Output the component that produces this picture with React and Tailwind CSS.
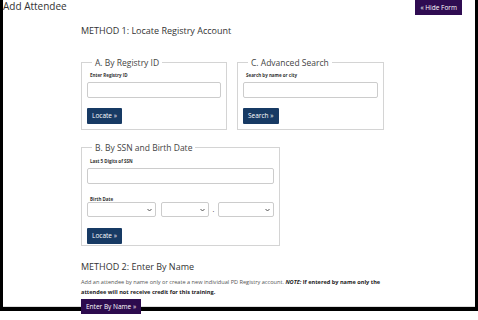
import React from 'react';

const Chevron = () => (
  <svg width="5" height="4" viewBox="0 0 10 8" className="text-[#555]">
    <path d="M1 2l4 4 4-4" fill="none" stroke="currentColor" strokeWidth="2" />
  </svg>
);

const Select = ({ className }) => (
  <div className={`h-[15px] border border-[#ccc] bg-white rounded-[2px] flex items-center justify-end pr-[3px] ${className}`}>
    <Chevron />
  </div>
);

const Label = ({ children }) => (
  <div className="ml-[3px] text-[4.5px] leading-[6px] font-bold text-[#333]">{children}</div>
);

const Field = ({ label }) => (
  <div>
    <Label>{label}</Label>
    <div className="mt-[4px] h-[16px] border border-[#ccc] rounded-[2px] bg-white" />
  </div>
);

const NavyButton = ({ children, className = '' }) => (
  <div className={`flex ${className}`}>
    <button className="h-[16px] px-[5px] bg-[#173a64] text-white text-[6.5px] leading-[16px] rounded-[1px]">
      {children}
    </button>
  </div>
);

const Box = ({ title, className = '', children }) => (
  <fieldset className={`border border-[#d4d4d4] px-[5px] ${className}`}>
    <legend className="ml-[5px] px-[3px] text-[8.5px] leading-[11px] text-[#444]">{title}</legend>
    {children}
  </fieldset>
);

export default function App() {
  return (
    <div className="w-[478px] h-[320px] bg-white overflow-hidden font-['Open_Sans',sans-serif] text-[#333] leading-none">
      <div className="mt-[9px] h-[311px] border-x-[3px] border-b-[4px] border-black">
        <div className="h-full border-b border-[#ddd]">
          <div className="-mt-[9px] h-[15px] flex justify-between items-start">
            <h1 className="-mt-[1px] text-[10px] leading-[14px] text-[#333]">Add Attendee</h1>
            <button className="mr-[13px] h-[15px] px-[5px] bg-[#2f0c52] text-white text-[6.5px] leading-[15px]">
              « Hide Form
            </button>
          </div>

          <div className="pl-[78px]">
            <h2 className="mt-[10px] text-[9px] leading-[12px]">METHOD 1: Locate Registry Account</h2>

            <div className="mt-[20px] flex gap-[10px]">
              <Box title="A. By Registry ID" className="w-[146px] pt-[4px] pb-[5px]">
                <Field label="Enter Registry ID" />
                <NavyButton className="mt-[10px]">Locate »</NavyButton>
              </Box>
              <Box title="C. Advanced Search" className="w-[147px] pt-[4px] pb-[5px]">
                <Field label="Search by name or city" />
                <NavyButton className="mt-[10px]">Search »</NavyButton>
              </Box>
            </div>

            <Box title="B. By SSN and Birth Date" className="mt-[12px] w-[198px] pt-[5px] pb-[1px]">
              <Field label="Last 5 Digits of SSN" />
              <div className="mt-[12px]">
                <Label>Birth Date</Label>
              </div>
              <div className="flex items-center">
                <Select className="w-[69px]" />
                <Select className="ml-[5px] w-[48px]" />
                <span className="w-[9px] text-center text-[7px] leading-[15px]">.</span>
                <Select className="w-[56px]" />
              </div>
              <NavyButton className="mt-[10.5px]">Locate »</NavyButton>
            </Box>

            <h2 className="mt-[15px] text-[9px] leading-[12px]">METHOD 2: Enter By Name</h2>
            <p className="mt-[4px] w-[310px] text-[5.6px] leading-[10px] text-[#555]">
              Add an attendee by name only or create a new individual PD Registry account.{' '}
              <strong className="text-[#222]"><em>NOTE:</em> If entered by name only the attendee will not receive credit for this training.</strong>
            </p>
            <div className="mt-[2px] flex">
              <button className="h-[15px] px-[5px] bg-[#2d0b4e] text-white text-[6.5px] leading-[15px]">
                Enter By Name »
              </button>
            </div>
          </div>
        </div>
      </div>
    </div>
  );
}
